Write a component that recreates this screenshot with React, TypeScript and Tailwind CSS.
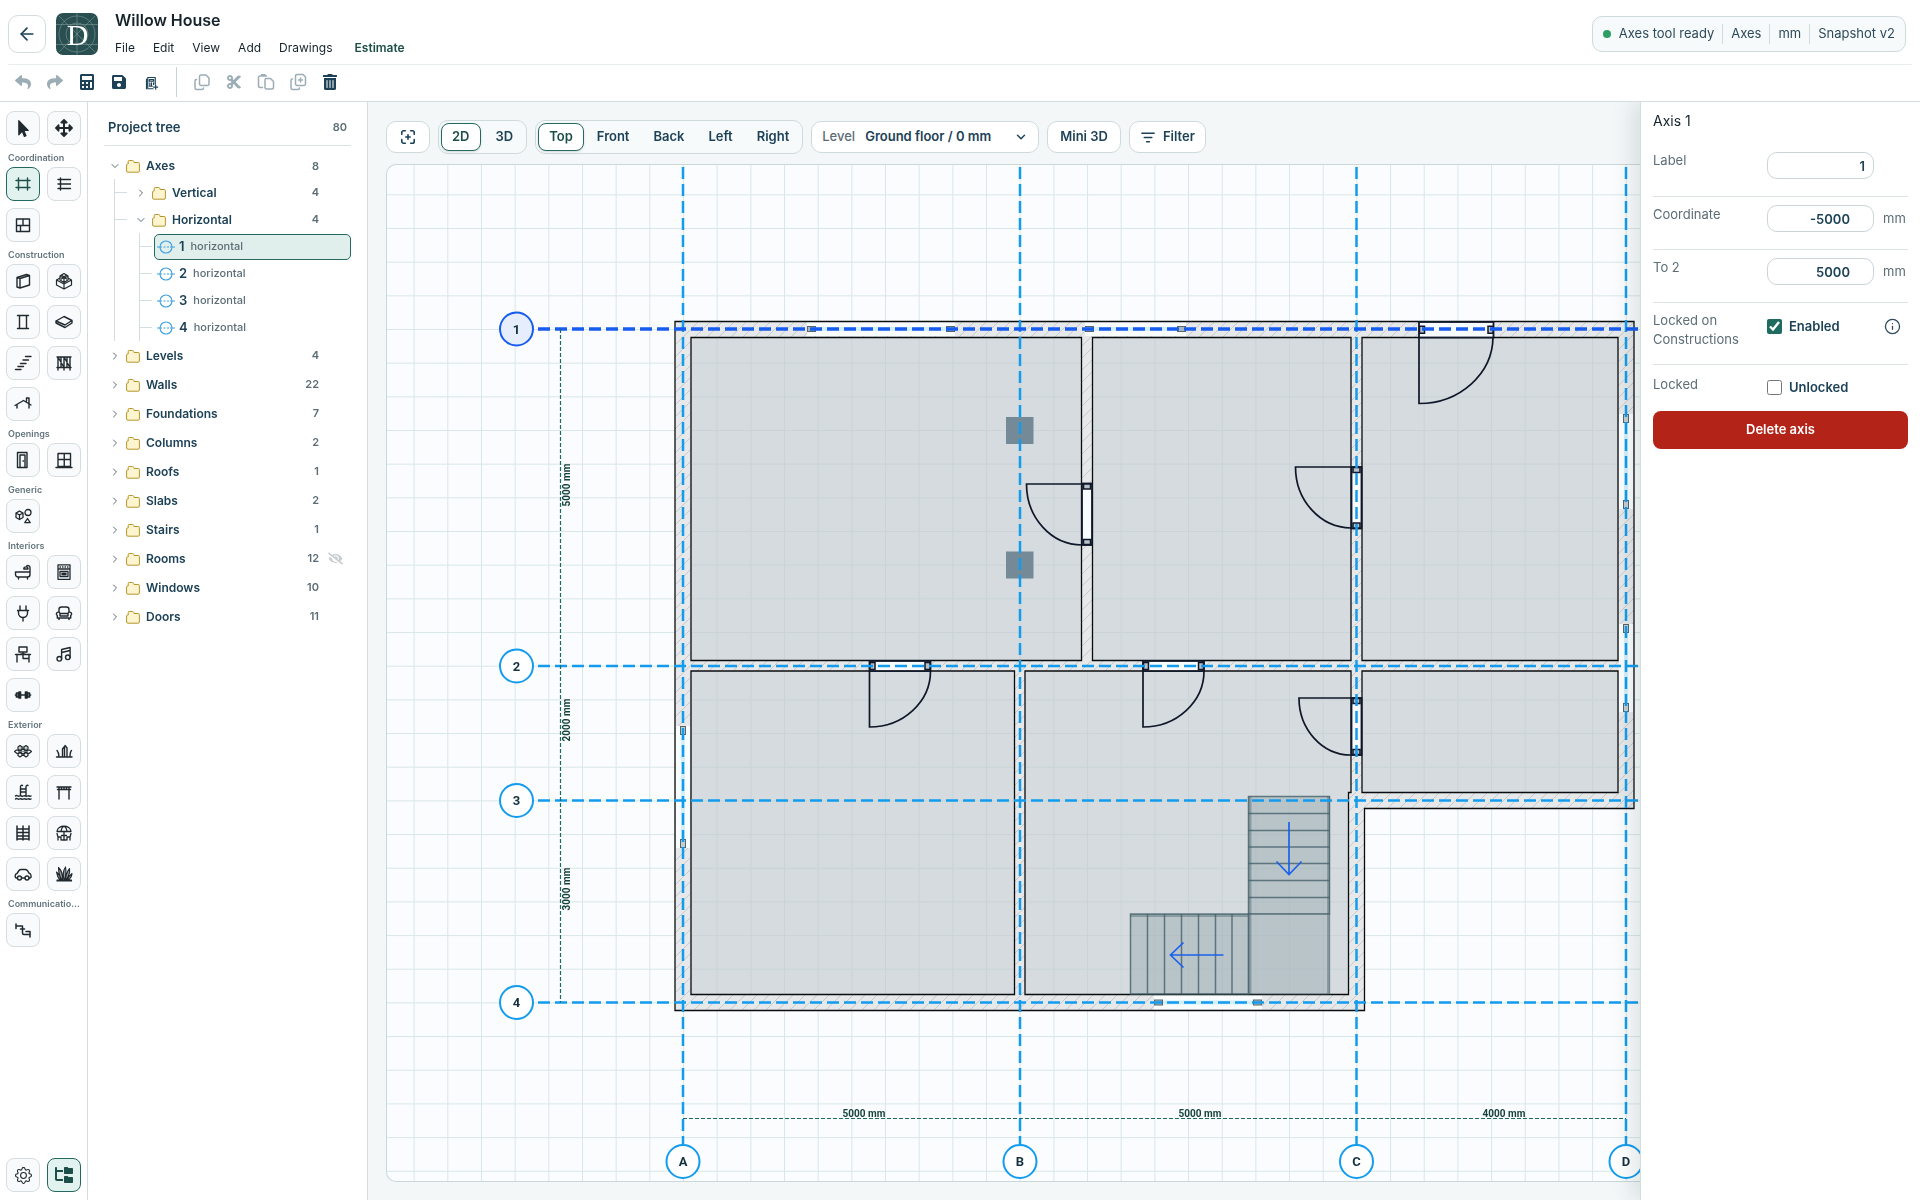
import React, { useState } from 'react';
import { FaReply, FaShare, FaCalculator, FaSave, FaTrashAlt, FaCut, FaMousePointer, FaArrowsAlt, FaEyeSlash } from 'react-icons/fa';
import { FaFolderTree } from 'react-icons/fa6';
import { BsGear } from 'react-icons/bs';
import { ArrowLeft, ChevronDown, ChevronRight, Info } from 'lucide-react';

const Glyph = ({ children, size = 18, sw = 1.4 }: { children: React.ReactNode; size?: number; sw?: number }) => (
  <svg width={size} height={size} viewBox="0 0 18 18" fill="none" stroke="currentColor" strokeWidth={sw} strokeLinecap="round" strokeLinejoin="round" aria-hidden="true">
    {children}
  </svg>
);

type Tool = { name: string; icon: React.ReactNode; active?: boolean };
type ToolGroup = { title?: string; tools: Tool[] };

const toolGroups: ToolGroup[] = [
  {
    tools: [
      { name: 'Select', icon: <FaMousePointer size={17} /> },
      { name: 'Move', icon: <FaArrowsAlt size={18} /> },
    ],
  },
  {
    title: 'Coordination',
    tools: [
      { name: 'Axes', active: true, icon: <Glyph><path d="M4.5 3v12M13.5 3v12M2 5.5h14M2 12.5h14" /></Glyph> },
      { name: 'Levels', icon: <Glyph><path d="M5.5 3v12M3 4.5h12.5M3 9h12.5M3 13.5h12.5" /></Glyph> },
      { name: 'Rooms', icon: <Glyph><path d="M2.5 3h13v12.5h-13zM9 3v6.5M2.5 9.5h13M6.5 9.5v6" /></Glyph> },
    ],
  },
  {
    title: 'Construction',
    tools: [
      { name: 'Wall', icon: <Glyph><path d="M3 5.5l9.5-3 3 1v9.500l-9.500 3-3-1zM6 6.500v9.500M3 5.500l3 1 9.500-3" /></Glyph> },
      { name: 'Foundation', icon: <Glyph sw={1.200}><path d="M1.500 8v5L9 17l7.500-4V8L9 12zM1.500 8L5 6M16.500 8L13 6M9 12v5M5 4l4-2.500L13 4v4l-4 2.500L5 8zM5 4l4 2.500L13 4M9 6.500v4M6.500 3l5 4M11.500 3l-5 4" /></Glyph> },
      { name: 'Column', icon: <Glyph><path d="M3.500 2.500h11M3.500 15.500h11M5.500 2.500v13M12.500 2.500v13" /></Glyph> },
      { name: 'Slab', icon: <Glyph><path d="M1 8l8-4.500L17 7.500l-7 4.500zM1 8v2l9 4.500 7-4.500V7.500" /></Glyph> },
      { name: 'Stairs', icon: <Glyph><path d="M11.500 2.500H17M9 6h5.500M6.500 9.500H12M4 12.500h5.500M1.500 15.500H7" /></Glyph> },
      { name: 'Railing', icon: <Glyph><path d="M2 3h14M2 13.500h14M3 3v13M9 3v13M15 3v13M3 3l6 10.500M6 3v10.500M9 3l6 10.500M12 3v10.500" /></Glyph> },
      { name: 'Roof', icon: <Glyph><path d="M1 10.500L9.500 5.500 17 10M3 9.500V13M15 9v4M12.500 6V3H15v5" /></Glyph> },
    ],
  },
  {
    title: 'Openings',
    tools: [
      { name: 'Door', icon: <Glyph><path d="M3.500 1.500h9.500v15H3.500zM6 4h5v12.500M6 4v12.500M9 10h.5" /></Glyph> },
      { name: 'Window', icon: <Glyph><path d="M3 2.500h12.500v13H3zM9.250 2.500v13M3 8.500h12.500M1 16.500h16" /></Glyph> },
    ],
  },
  {
    title: 'Generic',
    tools: [
      { name: 'Generic object', icon: <Glyph sw={1.300}><circle cx="14" cy="5.500" r="3" /><path d="M2 6l3.500-1.800L9 6v4.500L5.500 12.500 2 10.500zM2 6l3.500 2L9 6M5.500 8v4.500M13.500 11.500l2.700 4.200h-5.400z" /></Glyph> },
    ],
  },
  {
    title: 'Interiors',
    tools: [
      { name: 'Bath', icon: <Glyph><path d="M1.500 9h14.500v2.500a2.500 2.500 0 0 1-2.500 2.500h-9A2.800 2.800 0 0 1 1.500 11.500zM4.500 14v2M13.500 14v2M16 9V4.500a2 2 0 0 0-3.800-.8M9.800 6c0-2.800 4.200-2.800 4.200 0z" /></Glyph> },
      { name: 'Kitchen', icon: <Glyph sw={1.300}><path d="M3 1.800h12v14.500H3zM3 6h12M5 4h.5M7.500 4H8M10 4h.5M12.500 4h.5M5 8.500h8v5H5zM7 10.500h4v1H7z" /></Glyph> },
      { name: 'Electrical', icon: <Glyph><path d="M6 2v4M12 2v4M3.500 6.500h11M4.500 6.500v2.500a4.500 4.500 0 0 0 9 0V6.500M9 13.500V17" /></Glyph> },
      { name: 'Furniture', icon: <Glyph><path d="M4 8V5.500A2.500 2.500 0 0 1 6.500 3h5A2.500 2.500 0 0 1 14 5.500V8M5 12v-2a1.800 1.800 0 1 0-2.700 1.500V14h13.400v-2.500A1.800 1.800 0 1 0 13 10v2zM5 9.500h8M4 14v1.500M14 14v1.500" /></Glyph> },
      { name: 'Office', icon: <Glyph><path d="M5 2h8v5H5zM9 7v2M1.500 9.500h15M3 9.500V17M15 9.500V17M9 9.500v4h6M7 9h4" /></Glyph> },
      { name: 'Music', icon: <Glyph><circle cx="4.300" cy="13.800" r="2.300" /><circle cx="12.800" cy="12.300" r="2.300" /><path d="M6.600 13.800V4.500L15.100 2.500v9.800M6.600 7.500l8.500-2" /></Glyph> },
      { name: 'Fitness', icon: <Glyph sw={1.700}><path d="M2.500 7h2v4h-2zM13.500 7h2v4h-2zM5 6h1.500v6H5zM11.500 6H13v6h-1.500zM6.500 9h5M1.500 9h1M15.500 9h1" /></Glyph> },
    ],
  },
  {
    title: 'Exterior',
    tools: [
      { name: 'Paving', icon: <Glyph sw={1.200}><path d="M4 5l2-1.500L8 5v2L6 8.500 4 7zM10 5l2-1.500L14 5v2l-2 1.500L10 7zM7 8.500L9 7l2 1.500v2L9 12l-2-1.500zM.5 9.500L2.500 8 5 8.500V11l-2 .5zM17.500 9.500L15.500 8 13 8.500V11l2 .5zM4 12l2-1.500L8 12v1.500L6 15l-2-1.500zM10 12l2-1.500 2 1.500v1.500L12 15l-2-1.500zM6 6h.1M12 6h.1M9 9.500h.1M8 5h2M8 13.500h2" /></Glyph> },
      { name: 'Grass', icon: <Glyph><path d="M1.500 15h15.500M4 15c0-3-.5-5-2-6.500M7.500 15V7l2-2.500V15M12 15V6L10 3.500M15 15c0-3 0-5 1.500-6.500" /></Glyph> },
      { name: 'Pool', icon: <Glyph><path d="M6.500 12V4c0-1.500 1-2 2-1.500M12 12V4c0-1.500 1-2 2-1.500M6.500 6h5.500M6.500 9H12M1.500 13c1.500-1.500 2.500 1 4 0s2.500 1 4 0 2.500 1 4 0 2 1 3.500 0M1.500 16c1.500-1.500 2.500 1 4 0s2.500 1 4 0 2.500 1 4 0 2 1 3.500 0" /></Glyph> },
      { name: 'Pergola', icon: <Glyph><path d="M2 4h14M2.500 6.500h13M4 4v2.500M6.500 4v2.500M9 4v2.500M11.500 4v2.500M14 4v2.500M4 6.500V16M14 6.500V16" /></Glyph> },
      { name: 'Fence', icon: <Glyph sw={1.500}><path d="M3 2v14M9 2v14M15 2v14M3 5h12M3 8.500h12M3 12h12M3 15h12" /></Glyph> },
      { name: 'Patio', icon: <Glyph sw={1.300}><path d="M2 7.500c.5-7 13.500-7 14 0zM6 7.500C6.500 4 8 2.500 9 2.300c1 .2 2.500 1.700 3 5.200M9 7.500V16M2 9.500l1 3.500h3v3M16 9.500L15 13h-3v3M3 13v3M15 13v3M6.500 11.500h5M7 16h4" /></Glyph> },
      { name: 'Car', icon: <Glyph><circle cx="5.500" cy="13" r="2" /><circle cx="13" cy="13" r="2" /><path d="M3.300 13H2.500C.8 13 .5 9 3 8.500l2-3C5.400 5 6 4.500 7 4.500h4c1 0 2 .5 2.500 1.200l1.700 2.600c2 .3 2.800 4.700.5 4.700h-.5M7.600 13H11" /></Glyph> },
      { name: 'Plants', icon: <Glyph sw={1.100}><path fill="currentColor" d="M2 15h14.500v1H2zM6 15C5.500 12 4 9 1.500 7 2 10.500 3 13 5 15zM7.500 15C8 9 6 5 3.500 2.500 3.500 7 5 12 7 15zM9 15C7.500 9 8.500 5 10.500 2c1 5 .5 9-1 13zM10.500 15C11 10 12.500 6 14.500 3.500 15 8 13.500 12 11 15zM12.500 15c1-3 2.500-5 4.500-6.500-.2 3-1.500 5-4 6.500z" fillOpacity="0.450" /></Glyph> },
    ],
  },
  {
    title: 'Communicatio…',
    tools: [
      { name: 'Pipes', icon: <Glyph sw={1.500}><path d="M2 3v4.500M2 5h5M8.500 5.500V12c0 1 .5 1.500 1.500 1.500h6M7 5h1.500M6.500 8h4M16 10.500v5.500M12 10.500h4" /></Glyph> },
    ],
  },
];

const ToolButton = ({ name, icon, active }: Tool) => (
  <button
    type="button"
    aria-label={name}
    className={`flex h-[34px] w-[34px] items-center justify-center rounded-lg border ${active ? 'border-[#24695f] bg-[#e2f2ee] text-[#1c4f48]' : 'border-[#d6dde0] bg-[#f8fafb] text-[#20292f]'}`}
  >
    {icon}
  </button>
);

const ToolRail = () => (
  <nav aria-label="Tools" className="flex w-[88px] shrink-0 flex-col justify-between border-r border-[#d3dcde] bg-white px-1.5 pt-[9px] pb-2">
    <div>
      {toolGroups.map((group, i) => (
        <section key={i}>
          {group.title && (
            <h3 className="mt-2 mb-1 pl-0.5 text-[9px] leading-[10px] font-semibold whitespace-nowrap text-[#64757e]">{group.title}</h3>
          )}
          <div className="flex flex-wrap gap-[7px]">
            {group.tools.map((tool) => <ToolButton key={tool.name} {...tool} />)}
          </div>
        </section>
      ))}
    </div>
    <div className="flex gap-[7px]">
      <ToolButton name="Settings" icon={<BsGear size={17} />} />
      <ToolButton name="Project tree" icon={<FaFolderTree size={18} />} active />
    </div>
  </nav>
);

const Logo = () => (
  <svg width="42" height="42" viewBox="0 0 42 42" role="img" aria-label="Logo">
    <rect width="42" height="42" rx="7" fill="#294f50" />
    <g fill="none" stroke="#7d9999" strokeWidth="0.6">
      <circle cx="21" cy="21" r="18" />
      <circle cx="21" cy="21" r="11" />
      <path d="M0 11.500h42M0 31.500h42M21 0v42M3 3l36 36M39 3L3 39" />
    </g>
    <text x="21.500" y="31.500" textAnchor="middle" fontSize="30" fill="#fff" className="font-['Liberation_Serif',serif]">D</text>
  </svg>
);

const IconButton = ({ label, muted, children }: { label: string; muted?: boolean; children: React.ReactNode }) => (
  <button type="button" aria-label={label} className={`flex h-8 w-8 items-center justify-center ${muted ? 'text-[#9dadb5]' : ''}`}>
    {children}
  </button>
);

const Header = () => (
  <header className="shrink-0 border-b border-[#d3dcde] bg-white">
    <div className="mx-2 flex h-[65px] items-center border-b border-[#e8edee] pr-1.5">
      <button type="button" aria-label="Back" className="mt-1 flex h-[38px] w-[38px] items-center justify-center rounded-[10px] border border-[#d3dcde] bg-white text-[#1d4257]">
        <ArrowLeft size={20} strokeWidth={2} />
      </button>
      <div className="mt-1 ml-2.5"><Logo /></div>
      <div className="ml-[17px] flex flex-col">
        <h1 className="text-base leading-6 font-semibold text-[#16232b]">Willow House</h1>
        <div className="mt-2 flex items-center gap-[18px] text-[12px] leading-4 text-[#16232b]">
          {['File', 'Edit', 'View', 'Add', 'Drawings'].map((m) => (
            <button key={m} type="button">{m}</button>
          ))}
          <button type="button" className="ml-1 font-semibold text-[#1c4f48]">Estimate</button>
        </div>
      </div>
      <div className="mt-1 ml-auto flex h-9 items-center rounded-[10px] border border-[#cfdadc] bg-[#f7fafb] px-2.5 text-[13px] text-[#2e4a5a]">
        <span className="mr-2 h-2 w-2 rounded-full bg-[#2f9e63]" />
        <span className="pr-2">Axes tool ready</span>
        <span className="border-l border-[#d3dcde] px-2">Axes</span>
        <span className="border-l border-[#d3dcde] px-2">mm</span>
        <span className="border-l border-[#d3dcde] pl-2">Snapshot v2</span>
      </div>
    </div>
    <div className="flex h-9 items-center pb-0.5 pl-[7px] text-[#1d4257]">
      <div className="flex">
        <IconButton label="Undo" muted><FaReply size={16} /></IconButton>
        <IconButton label="Redo" muted><FaShare size={16} /></IconButton>
        <IconButton label="Calculator"><FaCalculator size={16} /></IconButton>
        <IconButton label="Save"><FaSave size={16} /></IconButton>
        <IconButton label="Save estimate">
          <Glyph size={15}><path d="M4.500 15V3h9v8M3 5v11.500h8M6.500 5.500h5v2h-5zM7 9.500v4M9 9.500v4M11.500 9.500v2M6.500 13.500H10M14 12v5M11.500 14.500h5" /></Glyph>
        </IconButton>
      </div>
      <div className="mr-[9px] ml-[9px] h-[30px] border-l border-[#cbd5d8]" />
      <div className="flex">
        <IconButton label="Copy" muted>
          <Glyph sw={1.500}><path d="M8 2h5l3 3v6a1.500 1.500 0 0 1-1.500 1.500H8A1.500 1.500 0 0 1 6.500 11V3.500A1.500 1.500 0 0 1 8 2zM3.500 6.500A1.500 1.500 0 0 0 2 8v7a1.500 1.500 0 0 0 1.500 1.500H9a1.500 1.500 0 0 0 1.500-1.500" /></Glyph>
        </IconButton>
        <IconButton label="Cut" muted><FaCut size={16} /></IconButton>
        <IconButton label="Paste" muted>
          <Glyph sw={1.500}><path d="M9.500 5.500h4l3 3v6a1.500 1.500 0 0 1-1.500 1.500H9.500A1.500 1.500 0 0 1 8 14.500V7a1.500 1.500 0 0 1 1.500-1.500zM5.500 14.500H3A1.500 1.500 0 0 1 1.500 13V4.500A1.500 1.500 0 0 1 3 3h6.500M4.500 3V1.800h3.500V3" /></Glyph>
        </IconButton>
        <IconButton label="Duplicate" muted>
          <Glyph sw={1.500}><path d="M8 1.500h6L16.500 4v7a1.500 1.500 0 0 1-1.500 1.500H8A1.500 1.500 0 0 1 6.500 11V3A1.500 1.500 0 0 1 8 1.500zM3.500 6A1.500 1.500 0 0 0 2 7.500V15a1.500 1.500 0 0 0 1.500 1.500H9a1.500 1.500 0 0 0 1.500-1.500M11.500 5v4M9.500 7h4" /></Glyph>
        </IconButton>
        <IconButton label="Delete"><FaTrashAlt size={16} /></IconButton>
      </div>
    </div>
  </header>
);

const Folder = () => (
  <svg width="14" height="14" viewBox="0 0 14 14" className="shrink-0" aria-hidden="true">
    <path d="M.6 12V6q0-1 1-1h.6V2.500q0-1 1-1h3.300q1 0 1.300 1L8 3.500h4.200q1.200 0 1.200 1.200V12q0 1.200-1.200 1.200H1.800Q.6 13.200.6 12z" fill="#fdf5d0" stroke="#b8952b" strokeWidth="1" />
  </svg>
);

const AxisIcon = () => (
  <svg width="18" height="14" viewBox="0 0 18 14" fill="none" stroke="#3f9fdf" strokeWidth="1.100" className="shrink-0" aria-hidden="true">
    <circle cx="9" cy="7" r="6" />
    <path d="M0 7h5M6.500 7h2M10 7h2M13 7h5" />
  </svg>
);

const folders = [
  { name: 'Levels', count: 4 },
  { name: 'Walls', count: 22 },
  { name: 'Foundations', count: 7 },
  { name: 'Columns', count: 2 },
  { name: 'Roofs', count: 1 },
  { name: 'Slabs', count: 2 },
  { name: 'Stairs', count: 1 },
  { name: 'Rooms', count: 12, hidden: true },
  { name: 'Windows', count: 10 },
  { name: 'Doors', count: 11 },
];

const TreeRow = ({ name, count, open, hidden }: { name: string; count: number; open?: boolean; hidden?: boolean }) => (
  <div className="flex flex-1 items-center">
    <button type="button" aria-expanded={!!open} className="flex flex-1 items-center text-left text-[12px] font-semibold text-[#1d4257]">
      <span className="flex w-[17px] text-[#5c6d76]">
        {open ? <ChevronDown size={12} /> : <ChevronRight size={12} />}
      </span>
      <Folder />
      <span className="ml-1.5">{name}</span>
    </button>
    <span className="text-[11px] font-semibold text-[#5c6d76]">{count}</span>
    <span className="flex w-8 justify-center text-[#c6cccf]">{hidden && <FaEyeSlash size={15} />}</span>
  </div>
);

const ProjectTree = () => {
  const [selected, setSelected] = useState('1');
  return (
    <aside className="w-[280px] shrink-0 border-r border-[#d3dcde] bg-white px-4">
      <div className="flex h-[44px] items-center justify-between border-b border-[#dbe2e4] px-1 pt-2">
        <h2 className="text-[13px] font-semibold text-[#1d4257]">Project tree</h2>
        <span className="text-[11px] font-semibold text-[#5c6d76]">80</span>
      </div>
      <ul className="pt-[7px]">
        <li>
          <div className="flex h-[26px] pl-[5px]"><TreeRow name="Axes" count={8} open /></div>
          <ul className="ml-[10px] border-l border-[#d3dcde]">
            <li className="flex h-[27px] items-center">
              <span className="w-3 border-t border-[#d3dcde]" />
              <div className="flex flex-1 pl-2"><TreeRow name="Vertical" count={4} /></div>
            </li>
            <li>
              <div className="flex h-[27px] items-center">
                <span className="w-3 border-t border-[#d3dcde]" />
                <div className="flex flex-1 pl-2"><TreeRow name="Horizontal" count={4} open /></div>
              </div>
              <ul className="ml-6 border-l border-[#d3dcde]">
                {['1', '2', '3', '4'].map((n) => (
                  <li key={n} className="flex h-[27px] items-center">
                    <span className="w-3 border-t border-[#d3dcde]" />
                    <button
                      type="button"
                      onClick={() => setSelected(n)}
                      className={`ml-[2px] flex h-[26px] flex-1 items-center rounded-[5px] border pl-0.5 text-[#1d4257] ${selected === n ? 'border-[#24695f] bg-[#e0efec]' : 'border-transparent'}`}
                    >
                      <AxisIcon />
                      <span className="ml-1 text-[13px] font-semibold">{n}</span>
                      <span className="ml-1.5 text-[11px] font-medium text-[#5c6d76]">horizontal</span>
                    </button>
                  </li>
                ))}
              </ul>
            </li>
          </ul>
        </li>
        {folders.map((f) => (
          <li key={f.name} className="flex h-[29px] pl-[5px]"><TreeRow {...f} /></li>
        ))}
      </ul>
    </aside>
  );
};

const boxClass = 'flex h-8 items-center rounded-[10px] border border-[#cfdadc] bg-white text-[13px] font-semibold text-[#1d4257]';

const ViewBar = () => {
  const [mode, setMode] = useState('2D');
  const [side, setSide] = useState('Top');
  const pill = (on: boolean) =>
    `h-7 rounded-lg border text-[13px] font-semibold ${on ? 'border-[#24695f] bg-white text-[#1c4f48] shadow-sm' : 'border-transparent text-[#1d4257]'}`;
  return (
    <div className="flex items-center gap-2 pr-4">
      <button type="button" aria-label="Fit to view" className={`${boxClass} w-[44px] justify-center`}>
        <Glyph size={16} sw={1.800}><path d="M2 6V4a2 2 0 0 1 2-2h2M12 2h2a2 2 0 0 1 2 2v2M16 12v2a2 2 0 0 1-2 2h-2M6 16H4a2 2 0 0 1-2-2v-2M9 6.500v5M6.500 9h5" /></Glyph>
      </button>
      <div className="flex h-[34px] items-center gap-1 rounded-[10px] border border-[#cfdadc] bg-[#f7fafb] px-0.5">
        {['2D', '3D'].map((m) => (
          <button key={m} type="button" onClick={() => setMode(m)} className={`px-[10px] ${pill(mode === m)}`}>{m}</button>
        ))}
      </div>
      <div className="flex h-[34px] items-center gap-[2px] rounded-[10px] border border-[#cfdadc] bg-[#f7fafb] px-0.5">
        {['Top', 'Front', 'Back', 'Left', 'Right'].map((s) => (
          <button key={s} type="button" onClick={() => setSide(s)} className={`px-2.5 ${pill(side === s)}`}>{s}</button>
        ))}
      </div>
      <div className={`${boxClass} relative w-[228px] pl-2.5`}>
        <label htmlFor="level" className="mr-2.5 font-medium text-[#5c6d76]">Level</label>
        <select id="level" className="flex-1 appearance-none bg-transparent outline-none">
          <option>Ground floor / 0 mm</option>
        </select>
        <ChevronDown size={14} strokeWidth={2.500} className="pointer-events-none absolute right-2.5" />
      </div>
      <button type="button" className={`${boxClass} px-3`}>Mini 3D</button>
      <button type="button" className={`${boxClass} gap-1.5 px-2.5`}>
        <Glyph size={17} sw={1.600}><path d="M2 4.500h13M4.500 9h8M7 13.500h3" /></Glyph>
        Filter
      </button>
    </div>
  );
};

const ROOMS = [
  'M691 337.500H1081.500V660.500H691z',
  'M1092.500 337.500H1351V660.500H1092.500z',
  'M1362 337.500H1618V660.500H1362z',
  'M691 671H1014.500V994.500H691z',
  'M1025 671H1351V792.500H1348.500V994.500H1025z',
  'M1362 671H1618V792.500H1362z',
];
const OUTLINE = 'M675 321.500H1634V808.500H1364.500V1010.500H675z';

const V_AXES = [{ name: 'A', x: 683 }, { name: 'B', x: 1020 }, { name: 'C', x: 1356.500 }, { name: 'D', x: 1626 }];
const H_AXES = [{ name: '1', y: 329 }, { name: '2', y: 666 }, { name: '3', y: 800.500 }, { name: '4', y: 1002.500 }];

// from/to run along the wall, at is its centre line
const WINDOWS = [
  { dir: 'h', at: 329, from: 807, to: 955 },
  { dir: 'h', at: 329, from: 1085, to: 1186 },
  { dir: 'h', at: 1002.500, from: 1154, to: 1262 },
  { dir: 'v', at: 683, from: 726, to: 848 },
  { dir: 'v', at: 1626, from: 414, to: 509 },
  { dir: 'v', at: 1626, from: 624, to: 712 },
];

const DOORS = [
  { x: 1419, y: 322, w: 74.500, h: 15.500, swing: 'M1419 337V403.500A74 67 0 0 0 1493 337' },
  { x: 869.500, y: 661, w: 61, h: 10, swing: 'M869.500 671V727A61 56 0 0 0 930.500 671' },
  { x: 1143, y: 661, w: 61, h: 10, swing: 'M1143 671V727A61 56 0 0 0 1204 671' },
  { x: 1082, y: 483.500, w: 10, h: 61.500, swing: 'M1082 484H1026.500A55.500 61 0 0 0 1082 545' },
  { x: 1351.500, y: 467, w: 10, h: 61.500, swing: 'M1351 467H1295.500A56 61 0 0 0 1351 528' },
  { x: 1351.500, y: 698, w: 10, h: 57, swing: 'M1351 698H1299A52 57 0 0 0 1351 755' },
];

const WindowMark = ({ dir, at, from, to }: (typeof WINDOWS)[number]) => {
  const mid = [from + 4.500, to - 4.500];
  return dir === 'h' ? (
    <g>
      <rect x={from} y={at - 7} width={to - from} height={14} fill="#fafdfe" />
      <path d={`M${mid[0]} ${at}H${mid[1]}`} stroke="#d4effb" strokeWidth="4" />
      {mid.map((m) => <rect key={m} x={m - 4} y={at - 2.500} width="8" height="5" fill="#a9b6bd" stroke="#56666f" />)}
    </g>
  ) : (
    <g>
      <rect x={at - 7} y={from} width={14} height={to - from} fill="#fafdfe" />
      <path d={`M${at} ${mid[0]}V${mid[1]}`} stroke="#d4effb" strokeWidth="4" />
      {mid.map((m) => <rect key={m} x={at - 2.500} y={m - 4} width="5" height="8" fill="#c3ced3" stroke="#56666f" />)}
    </g>
  );
};

const DoorMark = ({ x, y, w, h, swing }: (typeof DOORS)[number]) => {
  const across = w > h;
  return (
    <g stroke="#0f1729" fill="none">
      <rect x={x} y={y} width={w} height={h} fill="#f8fbff" strokeWidth="1.800" />
      <path d={swing} strokeWidth="1.700" />
      {(across ? [x + 3, x + w - 3] : [y + 3, y + h - 3]).map((p) => (
        <rect
          key={p}
          x={across ? p - 2.500 : x + 1.500}
          y={across ? y + h / 2 - 3.500 : p - 2.500}
          width={across ? 5 : w - 3}
          height={across ? 7 : 5}
          fill="#b7c1c7"
          strokeWidth="1.500"
        />
      ))}
    </g>
  );
};

const FloorPlan = () => (
  <svg className="block h-full w-full" role="img" aria-label="Ground floor plan">
    <defs>
      <pattern id="grid" width="33.670" height="33.670" patternUnits="userSpaceOnUse" x="683" y="329">
        <path d="M0 0H33.670M0 0V33.670" stroke="#d9e7e8" strokeWidth="2" fill="none" />
      </pattern>
      <pattern id="hatch" width="12" height="12" patternUnits="userSpaceOnUse">
        <rect width="12" height="12" fill="#e6e8e9" />
        <path d="M-2 14L14 -2M-2 2L2 -2M10 14L14 10" stroke="#c6cacc" strokeWidth="1" />
      </pattern>
    </defs>
    <g transform="translate(-387 -165)">
      <rect x="387" y="165" width="3000" height="2000" fill="url(#grid)" />

      <path d={OUTLINE} fill="#f9fcfd" />
      <path d={[OUTLINE, ...ROOMS].join('')} fill="url(#hatch)" fillRule="evenodd" />
      {WINDOWS.map((w, i) => <WindowMark key={i} {...w} />)}
      <path d={ROOMS.join('')} fill="#d5dbde" />
      <path d={ROOMS.join('')} fill="url(#grid)" opacity="0.350" className="mix-blend-multiply" />
      <path d={[OUTLINE, ...ROOMS].join('')} fill="none" stroke="#0a0d10" strokeWidth="1.300" />

      <g fill="#748b97">
        <rect x="1006" y="417" width="27.500" height="27" />
        <rect x="1006" y="551.500" width="27.500" height="27" />
      </g>

      <g fill="#8fa3ab" fillOpacity="0.400" stroke="#45606a" strokeOpacity="0.800" strokeWidth="1.500">
        <path d="M1248.500 796.500H1329.500V914H1248.500z" />
        <path d="M1248.500 914H1329.500V994H1248.500z" strokeOpacity="0.400" />
        <path d="M1130.500 914H1248.500V994H1130.500z" />
        <path fill="none" d="M1248.500 813.500h81M1248.500 830.500h81M1248.500 847h81M1248.500 863.500h81M1248.500 880.500h81M1248.500 897.500h81M1147.500 914v80M1164.500 914v80M1181.500 914v80M1198.500 914v80M1215.500 914v80M1232 914v80" />
        <path fill="none" strokeWidth="3" strokeOpacity="0.400" d="M1250 796V914M1328.500 796V994M1130 915.500H1248M1250 914V994" />
      </g>
      <path d="M1289 822V874.500M1276.500 861.500L1289 874.500L1301.500 861.500M1223.500 955H1170.500M1183.500 942.500L1170.500 955L1183.500 967.500" fill="none" stroke="#1b62ec" strokeWidth="1.700" />

      {DOORS.map((d, i) => <DoorMark key={i} {...d} />)}

      <g stroke="#139cee" strokeWidth="2.500" strokeDasharray="12 5">
        {H_AXES.slice(1).map((a) => <path key={a.name} d={`M538 ${a.y}H1638`} />)}
        {V_AXES.map((a) => <path key={a.name} d={`M${a.x} 167V1145`} />)}
      </g>
      <path d="M538 329H1638" stroke="#175cee" strokeWidth="3.600" strokeDasharray="12 5" />

      <path d="M560.500 329V1002.500M683 1118.500H1626" stroke="#1d6a5f" strokeWidth="1.200" strokeDasharray="4 2" fill="none" />
      <g fontSize="10" fontWeight="700" fill="#17423d" textAnchor="middle" className="font-['Roboto',sans-serif]">
        <text x="864" y="1117">5000 mm</text>
        <text x="1200" y="1117">5000 mm</text>
        <text x="1504" y="1117">4000 mm</text>
        <text transform="translate(570 485) rotate(-90)">5000 mm</text>
        <text transform="translate(570 720) rotate(-90)">2000 mm</text>
        <text transform="translate(570 889) rotate(-90)">3000 mm</text>
      </g>

      <g fontSize="13" fontWeight="700" textAnchor="middle" strokeWidth="2" className="font-['Roboto',sans-serif]">
        {H_AXES.map((a, i) => (
          <g key={a.name}>
            <circle cx="516.500" cy={a.y} r="16.500" fill={i === 0 ? '#e6eefd' : '#fff'} stroke={i === 0 ? '#175cee' : '#139cee'} />
            <text x="516.500" y={a.y + 4.500} fill="#14323f" strokeWidth="0">{a.name}</text>
          </g>
        ))}
        {V_AXES.map((a) => (
          <g key={a.name}>
            <circle cx={a.x} cy="1161.500" r="16.500" fill="#fff" stroke="#139cee" />
            <text x={a.x} y="1166" fill="#14323f" strokeWidth="0">{a.name}</text>
          </g>
        ))}
      </g>
    </g>
  </svg>
);

const inputClass = 'h-[27px] w-[107px] rounded-[10px] border border-[#cbd5d8] bg-white text-right text-[13px] font-semibold text-[#1d4257] outline-none';

const PropertyPanel = () => (
  <aside className="relative w-[280px] shrink-0 border-l border-[#d3dcde] bg-white px-3 shadow-[-8px_0_20px_rgba(20,50,60,0.12)]">
    <h2 className="pt-[7px] pb-[15px] text-[14px] leading-6 text-[#16232b]">Axis 1</h2>
    <div className="text-[13px] leading-[19px] text-[#5c6d76]">
      <div className="flex h-[49px] border-b border-[#dde3e5] pt-[3px]">
        <label htmlFor="label" className="w-[114px]">Label</label>
        <input id="label" defaultValue="1" className={`${inputClass} mt-[1px] pr-2`} />
      </div>
      <div className="flex h-[53px] border-b border-[#dde3e5] pt-2">
        <label htmlFor="coordinate" className="w-[114px]">Coordinate</label>
        <input id="coordinate" inputMode="numeric" defaultValue="-5000" className={`${inputClass} pr-[23px]`} />
        <span className="mt-1 ml-[9px]">mm</span>
      </div>
      <div className="flex h-[53px] border-b border-[#dde3e5] pt-2">
        <label htmlFor="distance" className="w-[114px]">To 2</label>
        <input id="distance" inputMode="numeric" defaultValue="5000" className={`${inputClass} pr-[23px]`} />
        <span className="mt-1 ml-[9px]">mm</span>
      </div>
      <div className="flex h-[62px] border-b border-[#dde3e5] pt-2">
        <span className="w-[114px]">Locked on Constructions</span>
        <label className="flex h-[30px] items-center gap-[7px] font-semibold text-[#1d4257]">
          <input type="checkbox" defaultChecked className="h-[15px] w-[15px] accent-[#1f6b60]" />
          Enabled
        </label>
        <button type="button" aria-label="More information" className="mr-[7px] ml-auto h-[30px] text-[#2e4a5a]">
          <Info size={17} strokeWidth={1.800} />
        </button>
      </div>
      <div className="flex h-[46px] pt-2.5">
        <span className="w-[114px]">Locked</span>
        <label className="flex h-6 items-center gap-[7px] font-semibold text-[#1d4257]">
          <input type="checkbox" className="h-[15px] w-[15px] accent-[#1f6b60]" />
          Unlocked
        </label>
      </div>
    </div>
    <button type="button" className="h-[38px] w-full rounded-lg bg-[#b42318] text-[13px] font-semibold text-white">Delete axis</button>
  </aside>
);

const App = () => (
  <div className="flex h-screen flex-col overflow-hidden bg-white font-['Inter','Liberation_Sans',sans-serif]">
    <Header />
    <div className="flex min-h-0 flex-1 overflow-hidden">
      <ToolRail />
      <ProjectTree />
      <main className="flex min-w-0 flex-1 flex-col bg-[#f4f7f8] pt-[18px] pb-[18px] pl-[18px]">
        <ViewBar />
        <div className="mt-2.5 min-h-0 flex-1 overflow-hidden rounded-l-[10px] border border-r-0 border-[#cbd8da] bg-[#fafcfd]">
          <FloorPlan />
        </div>
      </main>
      <PropertyPanel />
    </div>
  </div>
);

export default App;
